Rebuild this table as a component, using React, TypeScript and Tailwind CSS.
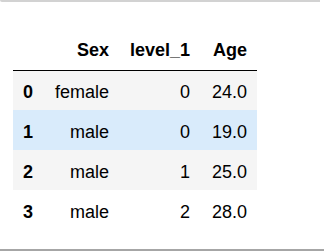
import React from "react";

const rows = [
  { i: "0", sex: "female", lvl: "0", age: "24.0", bg: "bg-[#f5f5f5]" },
  { i: "1", sex: "male", lvl: "0", age: "19.0", bg: "bg-[#d9ebfb]" },
  { i: "2", sex: "male", lvl: "1", age: "25.0", bg: "bg-[#f5f5f5]" },
  { i: "3", sex: "male", lvl: "2", age: "28.0", bg: "bg-white" },
];

export default function App() {
  return (
    <div className="w-[324px] h-[251px] bg-white flex flex-col overflow-hidden text-black" style={{ fontFamily: '"Liberation Sans", Arial, sans-serif' }}>
      <div className="h-[2px] w-[320px] bg-[#d2d2d2] rounded-bl-[2px] shrink-0" />
      <div className="flex-1 pt-[28px] pl-[13px]">
        <table className="border-collapse table-fixed w-[244px] text-[18px] leading-[20px]">
          <colgroup>
            <col className="w-[30px]" />
            <col className="w-[76px]" />
            <col className="w-[81px]" />
            <col className="w-[57px]" />
          </colgroup>
          <thead>
            <tr className="h-[40px] border-b border-black">
              <th className="pr-[10px] text-right font-bold"></th>
              <th className="pr-[10px] text-right font-bold">Sex</th>
              <th className="pr-[10px] text-right font-bold">level_1</th>
              <th className="pr-[10px] text-right font-bold">Age</th>
            </tr>
          </thead>
          <tbody>
            {rows.map((r) => (
              <tr key={r.i} className={`h-[40px] ${r.bg}`}>
                <th className="pr-[10px] pt-[3px] text-right font-bold">{r.i}</th>
                <td className="pr-[10px] pt-[3px] text-right">{r.sex}</td>
                <td className="pr-[10px] pt-[3px] text-right">{r.lvl}</td>
                <td className="pr-[10px] pt-[3px] text-right">{r.age}</td>
              </tr>
            ))}
          </tbody>
        </table>
      </div>
      <div className="h-[2px] w-full bg-[#a6a6a6] shrink-0" />
    </div>
  );
}
